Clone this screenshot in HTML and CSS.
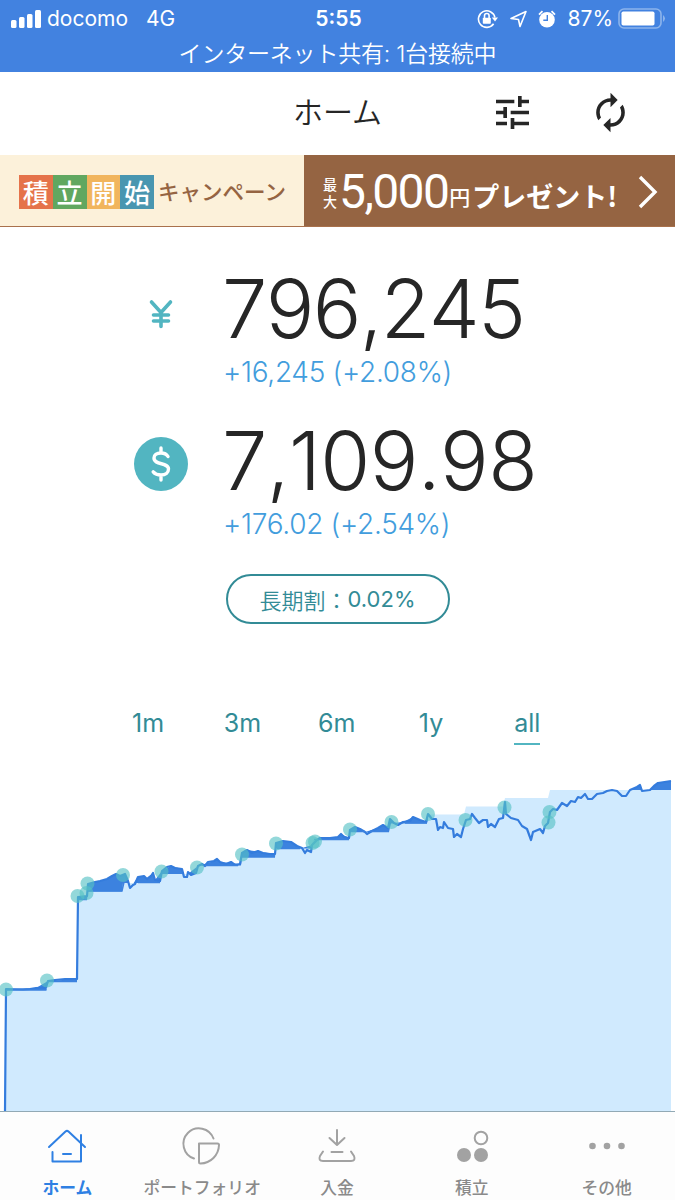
FILE: index.html
```html
<!DOCTYPE html>
<html lang="ja">
  <head>
    <meta charset="UTF-8" />
    <meta name="viewport" content="width=device-width, initial-scale=1.0" />
    <title>ホーム</title>
    <link rel="stylesheet" href="styles.css">
  </head>
  <body>
    <div class="status">
      <div class="status-row">
        <div class="status-left">
          <svg class="signal" width="31" height="18" viewBox="0 0 31 18" fill="#fff">
            <rect x="0" y="10" width="5.5" height="8" rx="1.5" />
            <rect x="8" y="7" width="5.5" height="11" rx="1.5" />
            <rect x="16" y="4" width="5.5" height="14" rx="1.5" />
            <rect x="24" y="0" width="6" height="18" rx="1.5" />
          </svg>
          <span class="carrier">docomo</span>
          <span class="network">4G</span>
        </div>
        <div class="clock">5:55</div>
        <div class="status-right">
          <svg width="22" height="20" viewBox="0 0 22 20" fill="none" stroke="#fff" stroke-width="1.6">
            <path d="M16.6 14.8A8.300 8.300 0 1 1 17.900 8.500" />
            <path d="M14.800 8.500H21L18 12.500z" fill="#fff" stroke="none" />
            <rect x="5.8" y="8.8" width="8" height="6" rx="0.8" fill="#fff" stroke="none" />
            <path d="M7.5 9V6.8a2.3 2.3 0 0 1 4.6 0V9" />
          </svg>
          <svg class="arrow" width="19" height="19" viewBox="0 0 19 19" fill="none" stroke="#fff" stroke-width="1.6" stroke-linejoin="round">
            <path d="M2 9.500L17 2.500L11 17.500L9.5 10.5Z" />
          </svg>
          <svg class="alarm" width="18" height="18" viewBox="0 0 18 18" fill="none">
            <circle cx="9" cy="9.7" r="7.8" fill="#fff" />
            <path d="M1 4.6L4.5 1.2M17 4.6L13.5 1.2" stroke="#fff" stroke-width="1.8" />
            <path d="M9.3 5v5.2H5.3" stroke="#4282e0" stroke-width="1.4" />
          </svg>
          <span class="percent">87%</span>
          <svg width="48" height="21" viewBox="0 0 48 21" fill="none">
            <rect x="1" y="1" width="42" height="19" rx="5" stroke="#8cb4ec" stroke-width="1.6" />
            <rect x="3.5" y="3.5" width="33" height="14" rx="1.8" fill="#fff" />
            <path d="M45 7q4 3.5 0 7z" fill="#8cb4ec" />
          </svg>
        </div>
      </div>
      <div class="tethering">インターネット共有: 1台接続中</div>
    </div>

    <header>
      <h1>ホーム</h1>
      <div class="actions">
        <svg width="33" height="33" viewBox="3 3 18 18" fill="#262626">
          <path d="M3 17v2h6v-2H3zM3 5v2h10V5H3zm10 16v-2h8v-2h-8v-2h-2v6h2zM7 9v2H3v2h4v2h2V9H7zm14 4v-2H11v2h10zm-6-4h2V7h4V5h-4V3h-2v6z" />
        </svg>
        <svg width="43" height="43" viewBox="0 0 24 24" fill="#262626">
          <path d="M12 6v3l4-4-4-4v3c-4.42 0-8 3.58-8 8 0 1.57.46 3.03 1.24 4.26L6.7 14.8c-.45-.83-.7-1.79-.7-2.8 0-3.31 2.69-6 6-6zm6.76 1.74L17.3 9.2c.44.84.7 1.79.7 2.8 0 3.31-2.69 6-6 6v-3l-4 4 4 4v-3c4.42 0 8-3.58 8-8 0-1.57-.46-3.03-1.24-4.26z" />
        </svg>
      </div>
    </header>

    <div class="banner">
      <div class="banner-left">
        <div class="tiles">
          <span class="tile red">積</span>
          <span class="tile green">立</span>
          <span class="tile yellow">開</span>
          <span class="tile blue">始</span>
        </div>
        <span class="campaign">キャンペーン</span>
      </div>
      <div class="banner-right">
        <span class="max">最<br>大</span>
        <span class="price">5,000</span>
        <span class="yen">円</span>
        <span class="present">プレゼント!</span>
        <svg width="22" height="36" viewBox="0 0 22 36" fill="none" stroke="#fff" stroke-width="3.4">
          <path d="M2 4L17 19L2 34" />
        </svg>
      </div>
    </div>

    <main>
      <div class="asset">
        <svg class="currency" width="54" height="54" viewBox="0 0 54 54" fill="none" stroke="#52b5c1" stroke-width="3.6" stroke-linecap="round">
          <path d="M17.5 17L27 27.500L36.5 17M27 27.500V41.500M19.5 30H34.500M19.500 36H34.500" />
        </svg>
        <div class="figures">
          <div class="amount jpy">796,245</div>
          <div class="gain">+16,245 (+2.08%)</div>
        </div>
      </div>
      <div class="asset">
        <svg class="currency" width="54" height="54" viewBox="0 0 54 54" fill="none" stroke="#fff" stroke-width="3.4" stroke-linecap="round" stroke-linejoin="round">
          <circle cx="27" cy="27" r="27" fill="#52b5c1" stroke="none" />
          <path d="M34 19.500C32.500 17 30 16 27 16C22.500 16 20 18.200 20 21C20 28.500 34.500 25 34.500 32C34.500 35.500 31.500 38 27 38C23.500 38 21 37 19.200 34.800M27 11V15.500M27 38V43" />
        </svg>
        <div class="figures">
          <div class="amount usd">7,109.98</div>
          <div class="gain">+176.02 (+2.54%)</div>
        </div>
      </div>
      <div class="discount"><span class="discount-name">長期割：</span><span>0.02%</span></div>

      <div class="periods">
        <span>1m</span>
        <span>3m</span>
        <span>6m</span>
        <span>1y</span>
        <span class="active">all</span>
      </div>

      <svg class="chart" width="675" height="351" viewBox="0 760 675 351">
        <!-- gain above the invested amount -->
        <path fill="#3c82df" d="M6 989L36 988L48 981L77 979L78 897L87 896L88 884L107 879L116 874L120 876L125 874L128 881L130 888L138 877L144 876L147 879L153 873L155 880L162 871L171 866L182 869L184 877L198 866L214 861L217 859L220 862L240 864L242 853L247 850L275 854L276 843L283 841L291 842L302 848L312 845L320 838L338 837L341 834L349 838L350 830L355 827L365 832L378 828L383 825L388 828L390 819L394 823L403 822L413 817L426 822L428 816L428 830L607 800L612 790L630 790L640 785L642 791L650 790L658 783L671 781V1000H6Z" />
        <!-- invested amount -->
        <path fill="#d0eafe" d="M5 1112L6 990H46.500L47 982H77L78 900H87L88 891.500H122L123 883H160L161 874H195L197 865.500H241L242 857H275L276 848.500H311L313 840H349L350 832H389L391 823.500H427L429 814.500H464L466 806.500H503L505 798H548L550 790H671V1112Z" />
        <!-- current value -->
        <path fill="none" stroke="#347cdd" stroke-width="2.2" stroke-linejoin="round" d="M5 1112L6 989L23 989.500L30 989L36 988L46 987.500L48 981L55 980L65 979L77 979L78 897L87 896L88 884L95 882L100 881L107 879L112 876L116 874L120 876L125 874L128 881L130 888L133 885L135 884L138 877L144 876L147 879L151 876L153 873L155 880L160 881L162 871L167 867L171 866L175 868L182 869L184 877L187 877L188 872L191 875L196 873L198 866L202 864L205 866L208 862L214 861L217 859L220 862L226 864L231 862L235 865L240 864L242 853L247 850L252 853L258 851L263 853L270 854L275 854L276 843L283 841L291 842L297 846L302 848L305 853L307 850L311 852L312 845L317 840L320 838L330 838L338 837L341 834L344 837L349 838L350 830L355 827L360 829L365 832L367 834L372 831L378 828L383 825L388 828L390 819L394 823L398 825L403 822L410 821L413 817L420 820L426 822L428 814L432 819L436 819L438 830L440 827L443 828L444 822L448 828L453 829L454 837L457 834L461 837L463 829L466 820L470 819L472 814L475 818L479 823L483 820L487 820L488 827L491 824L495 827L499 819L503 818L505 802L506 814L511 818L518 820L522 826L527 829L531 840L533 832L540 829L543 833L545 826L548 823L550 812L553 809L557 810L562 803L567 806L571 801L575 802L578 797L581 798L585 794L588 799L592 799L597 794L603 793L607 791L612 790L617 791L622 796L626 796L630 790L637 787L640 785L642 791L650 790L654 786L658 783L671 781" />
        <path class="floor" d="M6 990H46.500M47 981.500H77M78 899.500H87M88 891H122L124 882M138 882.500H160M162 873H182M205 865.500H238M242 857H275M277 848.500H300M314 839.500H349M351 831.500H365M370 831.500H389M405 823H427" />
        <g fill="#56c1c4" fill-opacity="0.63">
          <circle cx="6" cy="989.500" r="7" />
          <circle cx="47" cy="980.500" r="7" />
          <circle cx="77.500" cy="896" r="7" />
          <circle cx="86.500" cy="893" r="7" />
          <circle cx="87.500" cy="883.500" r="7" />
          <circle cx="123" cy="875" r="7" />
          <circle cx="161.500" cy="871.500" r="7" />
          <circle cx="197" cy="867.500" r="7" />
          <circle cx="242" cy="854.500" r="7" />
          <circle cx="276" cy="843.500" r="7" />
          <circle cx="312.500" cy="843" r="7" />
          <circle cx="315" cy="841.500" r="7" />
          <circle cx="350" cy="829.500" r="7" />
          <circle cx="391.500" cy="822" r="7" />
          <circle cx="428" cy="814" r="7" />
          <circle cx="465.500" cy="820" r="7" />
          <circle cx="504.500" cy="807.500" r="7" />
          <circle cx="549.500" cy="812" r="7" />
          <circle cx="548.500" cy="822.500" r="7" />
        </g>
      </svg>
    </main>

    <nav>
      <a class="current">
        <svg width="40" height="36" viewBox="0 0 40 36">
          <path d="M2 18L18.500 2.500Q20 1.200 21.500 2.500L38 18M34 6V32.500H5.500V23M16 25H24" />
        </svg>
        <span>ホーム</span>
      </a>
      <a>
        <svg width="40" height="36" viewBox="0 0 40 36">
          <path d="M31.500 9.500A15.500 15.500 0 1 0 12 29.500M17 14.500H35.500Q37 14.500 37 16A19 19 0 0 1 18.500 34.500Q17 34.500 17 33Z" />
        </svg>
        <span>ポートフォリオ</span>
      </a>
      <a>
        <svg width="40" height="36" viewBox="0 0 40 36">
          <path d="M20 1V15.500M12.500 9L20 16L27.500 9M6 22.500L3 27Q1 32 6 32H34Q39 32 37 27L34 22.500M14.500 23H25.500" />
        </svg>
        <span>入金</span>
      </a>
      <a>
        <svg width="40" height="36" viewBox="0 0 40 36">
          <circle cx="29" cy="9" r="6.300" />
          <circle class="solid" cx="12" cy="26" r="7" />
          <circle class="solid" cx="29" cy="26" r="7" />
        </svg>
        <span>積立</span>
      </a>
      <a>
        <svg width="40" height="36" viewBox="0 0 40 36">
          <circle class="solid" cx="5.500" cy="17" r="3.300" />
          <circle class="solid" cx="20" cy="17" r="3.300" />
          <circle class="solid" cx="34.500" cy="17" r="3.300" />
        </svg>
        <span>その他</span>
      </a>
    </nav>
  </body>
</html>
```

FILE: styles.css
```css
* {
  box-sizing: border-box;
}

body {
  margin: 0;
  width: 675px;
  height: 1200px;
  display: flex;
  flex-direction: column;
  overflow: hidden;
  background: #fff;
  color: #262626;
  font-family: "Inter", "Noto Sans CJK JP", sans-serif;
  white-space: nowrap;
}

svg {
  display: block;
  flex-shrink: 0;
}

/* Status bar */
.status {
  height: 72px;
  background: #4282e0;
  color: #fff;
}

.status-row {
  display: grid;
  grid-template-columns: 1fr auto 1fr;
  align-items: center;
  height: 37px;
  padding: 0 9px 0 11px;
  font-size: 21px;
}

.status-left,
.status-right {
  display: flex;
  align-items: center;
}

.status-right {
  justify-content: flex-end;
}

.carrier {
  margin-left: 5px;
}

.network {
  margin-left: 18px;
}

.clock {
  font-weight: 600;
}

.arrow {
  margin-left: 10px;
}

.alarm {
  margin-left: 10px;
}

.percent {
  margin: 0 5px 0 12px;
}

.tethering {
  font-size: 23px;
  line-height: 34px;
  font-weight: 350;
  letter-spacing: -0.2px;
  text-align: center;
}

/* Header */
header {
  height: 83px;
  display: grid;
  grid-template-columns: 1fr auto 1fr;
  align-items: center;
}

h1 {
  grid-column: 2;
  margin: 0 0 3px;
  font-size: 30px;
  font-weight: 350;
  line-height: 40px;
}

.actions {
  display: flex;
  align-items: center;
  justify-content: flex-end;
  gap: 60px;
  padding: 0 43px 3px 0;
}

/* Banner */
.banner {
  height: 72px;
  display: flex;
  border-bottom: 1px solid #a9714c;
  font-family: "Noto Sans CJK JP", sans-serif;
}

.banner-left {
  width: 304px;
  display: flex;
  align-items: center;
  padding: 3px 0 0 19px;
  background: #fcf1da;
}

.tiles {
  display: flex;
}

.tile {
  width: 33.75px;
  height: 34px;
  color: #fff;
  font-size: 26px;
  font-weight: 500;
  line-height: 33px;
  text-align: center;
}

.red {
  background: #e5734a;
}

.green {
  background: #61a760;
}

.yellow {
  background: #f1b55d;
}

.blue {
  background: #4996b0;
}

.campaign {
  margin: -3px 0 0 4px;
  color: #956442;
  font-size: 21.5px;
  font-weight: 500;
}

.banner-right {
  flex: 1;
  display: flex;
  align-items: center;
  padding-left: 19px;
  background: #956442;
  color: #fff;
}

.max {
  padding-top: 4px;
  font-size: 14px;
  font-weight: 500;
  line-height: 17px;
}

.price {
  margin: 2px 0 0 2px;
  font-family: "Roboto", sans-serif;
  font-size: 48px;
  letter-spacing: -1.6px;
}

.yen {
  margin-left: 1px;
  padding-top: 11px;
  font-size: 21px;
  font-weight: 500;
}

.present {
  margin-left: 2px;
  padding-top: 9px;
  font-size: 27px;
  font-weight: 700;
  margin-right: auto;
}

.banner-right svg {
  margin-right: 15px;
}

/* Totals */
main {
  height: 884px;
  display: flex;
  flex-direction: column;
}

.asset {
  display: flex;
  height: 152px;
  padding-left: 134px;
}

.asset:first-child {
  margin-top: 33px;
}

.currency {
  margin: 25px 34px 0 0;
}

.amount {
  font-size: 81px;
  font-weight: 300;
  line-height: 98px;
  font-kerning: none;
  font-feature-settings: "calt" 0;
}

.jpy {
  letter-spacing: -1.7px;
}

.usd {
  letter-spacing: -0.6px;
}

.gain {
  margin: -4px 0 0 1px;
  color: #429ddd;
  font-size: 28px;
  font-weight: 300;
  line-height: 36px;
  letter-spacing: -0.3px;
}

.discount {
  display: flex;
  align-items: center;
  justify-content: center;
  align-self: center;
  width: 224px;
  height: 50px;
  margin-top: 10px;
  border: 2px solid #328b96;
  border-radius: 25px;
  color: #328b96;
  font-size: 22px;
}

.discount-name {
  font-weight: 350;
}

/* Period tabs */
.periods {
  display: flex;
  margin-top: 79px;
  padding-left: 101px;
}

.periods span {
  width: 94.3px;
  height: 42px;
  color: #328b96;
  font-size: 25px;
  line-height: 40px;
  text-align: center;
}

.periods .active {
  width: 26px;
  margin-left: 36px;
  border-bottom: 2px solid #52b5c1;
}

.chart {
  margin-top: auto;
}

/* Baselines of the gain area */
.floor {
  fill: none;
  stroke: #3c82df;
  stroke-width: 1.5;
}

/* Tab bar */
nav {
  height: 89px;
  display: grid;
  grid-template-columns: repeat(5, 1fr);
  padding-right: 1px;
  border-top: 1px solid #92a9b5;
  background: #fdfdfd;
}

nav a {
  display: flex;
  flex-direction: column;
  align-items: center;
  padding-top: 17px;
  color: #8a8a8a;
  font-size: 16.8px;
  font-weight: 500;
}

nav a span {
  margin-top: auto;
  line-height: 24px;
}

nav svg {
  overflow: visible;
  fill: none;
  stroke: #a2a2a2;
  stroke-width: 2;
  stroke-linecap: round;
  stroke-linejoin: round;
}

nav .solid {
  fill: #a2a2a2;
  stroke: none;
}

nav .current {
  color: #2f80e3;
  font-weight: 700;
}

nav .current svg {
  stroke: #2f80e3;
}
```
